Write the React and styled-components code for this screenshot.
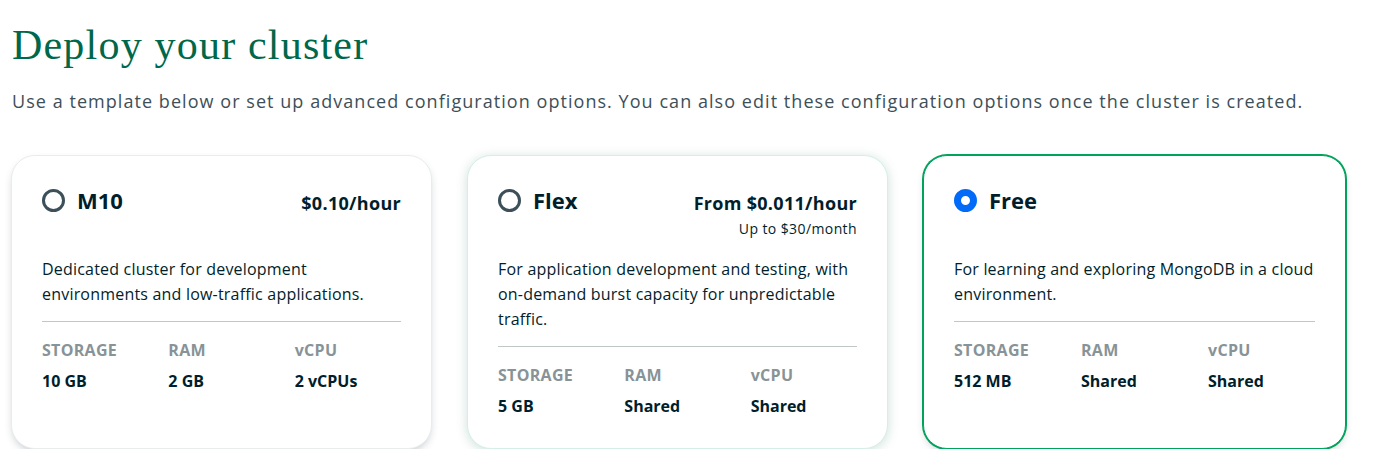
import React from "react";
import styled, { createGlobalStyle } from "styled-components";

const Global = createGlobalStyle`
  html, body { margin: 0; padding: 0; background: #ffffff; }
  body { font-family: "Open Sans", "Noto Sans", sans-serif; color: #001E2B; }
`;

const Page = styled.main`
  padding: 21px 11px 0 11px;
`;

const Title = styled.h1`
  margin: 0;
  font-family: "Liberation Serif", serif;
  font-weight: 400;
  font-size: 42px;
  line-height: 48px;
  letter-spacing: 1.2px;
  color: #00684A;
  padding-left: 1px;
`;

const Subtitle = styled.p`
  margin: 20px 0 0 0;
  font-size: 18px;
  line-height: 24px;
  letter-spacing: 1.05px;
  color: #3D4F58;
  padding-left: 1px;
`;

const Cards = styled.div`
  margin-top: 42px;
  display: grid;
  grid-template-columns: 421px 421px 423px;
  column-gap: 35px;
`;

const Card = styled.div`
  box-sizing: border-box;
  height: 294px;
  border-radius: 24px;
  background: #fff;
  padding: 30px 30px 30px 30px;
  display: flex;
  flex-direction: column;
  border: 1px solid ${(p) => (p.$variant === "hover" ? "#D5EFE6" : "#E8EDEB")};
  box-shadow: ${(p) =>
    p.$variant === "hover"
      ? "0 2px 12px 0 rgba(0, 104, 74, 0.2)"
      : "0 4px 10px -3px rgba(0, 30, 43, 0.28)"};
  ${(p) =>
    p.$variant === "selected" &&
    `
    border: 1px solid #00A35C;
    box-shadow: 0 0 0 1px #00A35C, 0 4px 10px -3px rgba(0, 30, 43, 0.28);
  `}
`;

const Header = styled.div`
  display: flex;
  justify-content: space-between;
  align-items: flex-start;
  height: 71px;
`;

const NameGroup = styled.div`
  display: flex;
  align-items: center;
  gap: 12px;
`;

const Radio = styled.span`
  box-sizing: border-box;
  width: 23px;
  height: 23px;
  border-radius: 50%;
  border: ${(p) => (p.$checked ? "7px solid #016BF8" : "3px solid #3D4F58")};
  background: #fff;
  flex: none;
`;

const Name = styled.span`
  font-size: 22px;
  line-height: 28px;
  font-weight: 700;
  color: #001E2B;
`;

const PriceBlock = styled.div`
  text-align: right;
  padding-top: 5px;
`;

const Price = styled.div`
  font-size: 18px;
  line-height: 24px;
  font-weight: 700;
  letter-spacing: 0.3px;
  color: #001E2B;
`;

const SubPrice = styled.div`
  margin-top: 4px;
  font-size: 14px;
  line-height: 20px;
  letter-spacing: 0.4px;
  color: #001E2B;
`;

const Description = styled.p`
  margin: 0;
  font-size: 16px;
  line-height: 25px;
  letter-spacing: 0.2px;
  color: #001E2B;
`;

const Divider = styled.hr`
  margin: 14px 0 0 0;
  border: none;
  border-top: 1px solid #C1C7C6;
`;

const Specs = styled.div`
  margin-top: 16px;
  display: grid;
  grid-template-columns: repeat(3, 1fr);
  column-gap: 20px;
  row-gap: 7px;
`;

const Label = styled.div`
  font-size: 16px;
  line-height: 24px;
  font-weight: 700;
  letter-spacing: 0.3px;
  color: #889397;
`;

const Value = styled.div`
  font-size: 16px;
  line-height: 24px;
  font-weight: 700;
  color: #001E2B;
`;

const tiers = [
  {
    name: "M10",
    price: "$0.10/hour",
    desc: "Dedicated cluster for development environments and low-traffic applications.",
    specs: ["10 GB", "2 GB", "2 vCPUs"],
    variant: "default",
  },
  {
    name: "Flex",
    price: "From $0.011/hour",
    sub: "Up to $30/month",
    desc: "For application development and testing, with on-demand burst capacity for unpredictable traffic.",
    specs: ["5 GB", "Shared", "Shared"],
    variant: "hover",
  },
  {
    name: "Free",
    desc: "For learning and exploring MongoDB in a cloud environment.",
    specs: ["512 MB", "Shared", "Shared"],
    variant: "selected",
  },
];

export default function App() {
  return (
    <>
      <Global />
      <Page>
        <Title>Deploy your cluster</Title>
        <Subtitle>
          Use a template below or set up advanced configuration options. You can also edit these configuration options once the cluster is created.
        </Subtitle>
        <Cards>
          {tiers.map((t) => (
            <Card key={t.name} $variant={t.variant}>
              <Header>
                <NameGroup>
                  <Radio $checked={t.variant === "selected"} />
                  <Name>{t.name}</Name>
                </NameGroup>
                {t.price && (
                  <PriceBlock>
                    <Price>{t.price}</Price>
                    {t.sub && <SubPrice>{t.sub}</SubPrice>}
                  </PriceBlock>
                )}
              </Header>
              <Description>{t.desc}</Description>
              <Divider />
              <Specs>
                <Label>STORAGE</Label>
                <Label>RAM</Label>
                <Label>vCPU</Label>
                {t.specs.map((s, i) => (
                  <Value key={i}>{s}</Value>
                ))}
              </Specs>
            </Card>
          ))}
        </Cards>
      </Page>
    </>
  );
}
